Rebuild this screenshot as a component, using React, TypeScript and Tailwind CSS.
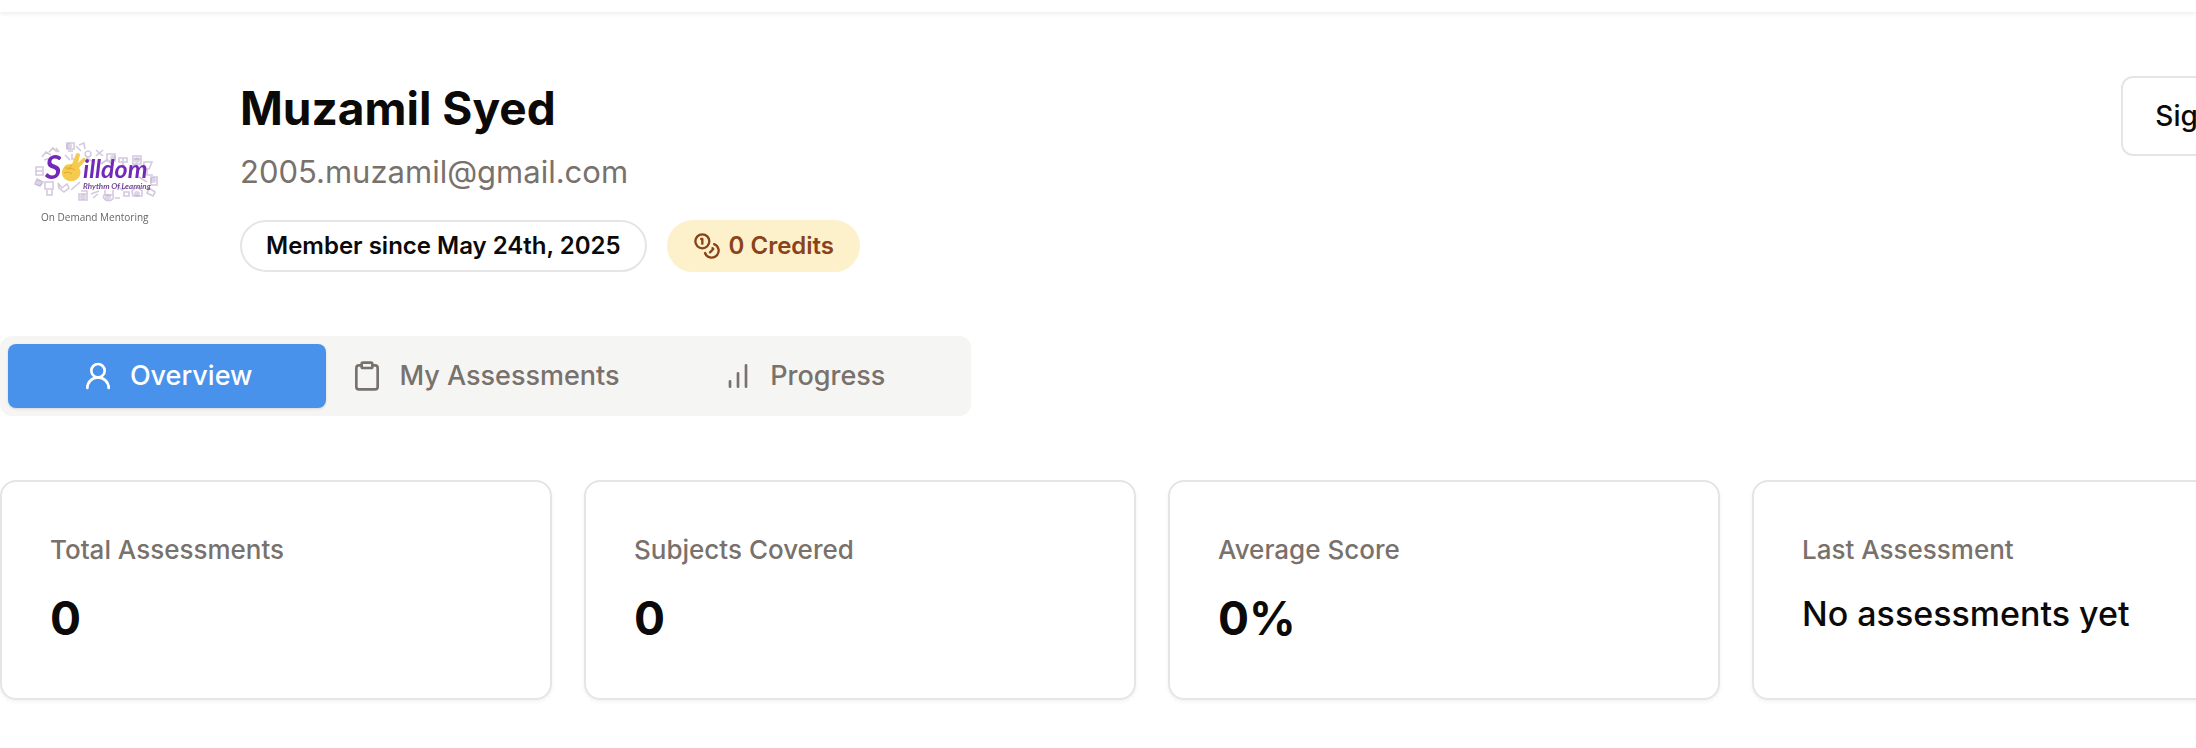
import type { ReactNode } from 'react';
import { Clipboard, Coins, UserRound } from 'lucide-react';

function BarsIcon() {
  return (
    <svg className="size-8 shrink-0" viewBox="0 0 24 24" fill="none" stroke="currentColor" strokeWidth="2" strokeLinecap="round" aria-hidden="true">
      <path d="M12 20V10M18 20V4M6 20v-4" />
    </svg>
  );
}

function Logo() {
  return (
    <svg className="size-48 shrink-0 blur-[0.5px]" viewBox="0 0 192 192" role="img" aria-label="Skilldom logo">
      <g fill="none" stroke="#a894bd" strokeWidth="1.6" opacity=".5">
        <path d="M42 81l4-5 5 3M49 76l4-4 4 4M56 72l3 4M44 84l7-2M36 91h7v8h-7zM36 95h7M37 103l6 3-3 4-5-2zM45 106h8v7h-8zM47 114v5h5v-5M58 107l4 5 5-4 2 4-5 4-5-4z" />
        <path d="M67 67h7v6h-7zM68 75h5M76 70l5 5M79 69l5-2 1 6M72 78v5h6M88 75a3 3 0 1 0 .1 0M96 74l7 6M103 74l-7 6M107 78h8v7h-8zM109 86l5 3M119 82h8v4h-8zM123 82v7" />
        <path d="M133 80h8v8h-8zM134 83h6M144 86h8l-3 7h-6zM147 93v6h6M151 101h6v8h-6zM149 112l6 4-2 4-6-3zM132 115l5-4 5 4v5h-9zM124 116h5v4h-5z" />
        <path d="M79 118h8v6h-8zM81 115h6v3M91 118l8-3M93 122l5-4M104 119a5 4 0 1 0 9 0zM105 114v5M113 114v5M115 122h5M71 114l9-8M117 109l5 5 4-3M86 82l8 4M101 88l7-5M65 79l5 5M139 101l8 5M129 92l8-4" />
      </g>
      <g fill="#bcaacd" opacity=".5">
        <circle cx="69" cy="70" r="3" /><circle cx="113" cy="82" r="3" /><circle cx="137" cy="84" r="3" />
        <circle cx="39" cy="107" r="3" /><circle cx="83" cy="121" r="3" /><circle cx="108" cy="121" r="3" />
        <circle cx="153" cy="104" r="3" /><circle cx="137" cy="118" r="3" />
      </g>
      <g fill="#7428b8" fontFamily="Lato, sans-serif" fontStyle="italic">
        <text x="45" y="103" fontSize="32" fontWeight="700">S</text>
        <text x="83" y="102" fontSize="25" fontWeight="700">illdom</text>
        <text x="83" y="113" fontSize="8" fontWeight="700" fill="#71469a">Rhythm Of Learning</text>
      </g>
      <path d="M64 91c2-3 5-3 8-3l4-10c1-2 4-1 4 1l-2 8 5-5c2-1 3 1 2 3l-6 7c3 4 1 10-3 12-6 3-13 0-14-6-.5-3 .5-5 2-7z" fill="#f5cb4d" />
      <path d="M65 92c4 0 7 0 10 2M64 97c3-1 6-1 8 1M72 89l-4 5" fill="none" stroke="#dda936" strokeWidth="1" />
      <text x="41" y="145" fontSize="10" fill="#666" fontFamily="'Open Sans', sans-serif">On Demand Mentoring</text>
    </svg>
  );
}

function Tab({ icon, label, active = false }: { icon: ReactNode; label: string; active?: boolean }) {
  return (
    <button
      type="button"
      role="tab"
      aria-selected={active}
      className={
        active
          ? 'flex h-16 items-center justify-center gap-4 rounded-lg bg-[#4892ec] text-white shadow-sm'
          : 'flex h-16 items-center justify-center gap-4 rounded-lg text-[#78716c]'
      }
    >
      {icon}
      <span className="whitespace-nowrap text-[27px] leading-10 font-medium">{label}</span>
    </button>
  );
}

const stats = [
  { label: 'Total Assessments', value: '0' },
  { label: 'Subjects Covered', value: '0' },
  { label: 'Average Score', value: '0%' },
  { label: 'Last Assessment', value: 'No assessments yet', note: true },
];

export default function App() {
  return (
    <div className="min-h-screen overflow-x-clip bg-white font-[Inter,sans-serif] text-[#0c0a09]">
      <header className="h-3 bg-white shadow-[0_2px_4px_rgba(0,0,0,0.07)]" />
      <main className="-mr-27 flex flex-col gap-16 pt-16">
        <section className="flex items-start gap-12">
          <Logo />
          <div className="flex grow flex-col items-start">
            <h1 className="text-[46px] leading-16 font-bold">Muzamil Syed</h1>
            <p className="mt-2 text-[31px] leading-12 text-[#78716c]">2005.muzamil@gmail.com</p>
            <div className="mt-6 flex gap-5">
              <span className="rounded-full border-2 border-[#e5e5e5] px-6 py-2 text-[24px] leading-8 font-semibold">
                Member since May 24th, 2025
              </span>
              <span className="flex items-center gap-2 rounded-full border-2 border-[#fcf1cb] bg-[#fcf1cb] px-6 py-2 text-[24px] leading-8 font-semibold text-[#8a421a]">
                <Coins className="size-7" aria-hidden="true" />
                0 Credits
              </span>
            </div>
          </div>
          <button type="button" className="h-20 rounded-xl border-2 border-[#e5e5e5] px-8 text-[28px] leading-10 font-medium">
            Sign Out
          </button>
        </section>

        <div role="tablist" className="grid w-[971px] max-w-full grid-cols-3 rounded-xl bg-[#f5f5f4] p-2">
          <Tab active label="Overview" icon={<UserRound className="size-8 shrink-0" aria-hidden="true" />} />
          <Tab label="My Assessments" icon={<Clipboard className="size-8 shrink-0" aria-hidden="true" />} />
          <Tab label="Progress" icon={<BarsIcon />} />
        </div>

        <section className="grid grid-cols-4 gap-8">
          {stats.map((stat) => (
            <article key={stat.label} className="flex min-h-55 flex-col gap-4 rounded-2xl border-2 border-[#e5e5e5] p-12 shadow-[0_2px_4px_rgba(0,0,0,0.05)]">
              <h2 className="text-[26px] leading-10 font-medium text-[#78716c]">{stat.label}</h2>
              <p className={stat.note ? 'text-[34px] leading-14 font-medium' : 'text-[46px] leading-16 font-bold'}>{stat.value}</p>
            </article>
          ))}
        </section>
      </main>
    </div>
  );
}
